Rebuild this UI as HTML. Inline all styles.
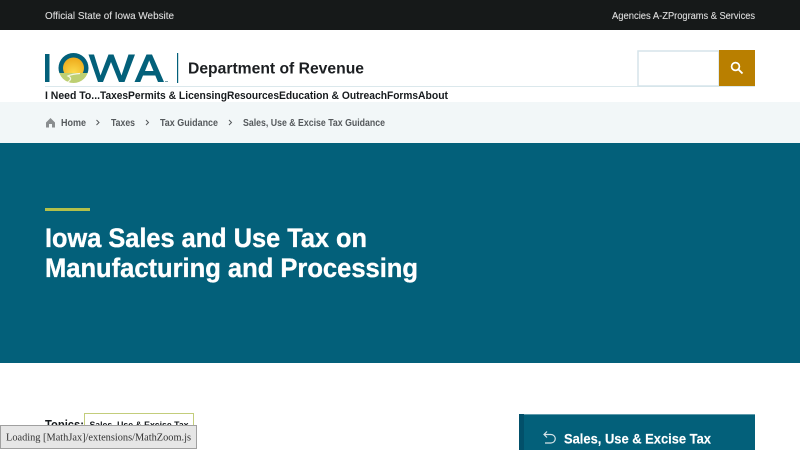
<!DOCTYPE html>
<html lang="en"><head><meta charset="utf-8"><title>Iowa Sales and Use Tax on Manufacturing and Processing</title>
<style>
html,body{margin:0;padding:0;width:800px;height:450px;overflow:hidden;background:#fff}
svg{display:block}
text{font-family:"Liberation Sans",sans-serif;white-space:pre}
.b{font-weight:700}
.n{font-size:11px;font-weight:700;fill:#161a1d}
.c{font-size:9.700px;font-weight:700;fill:#55595c}
.t{font-size:10.200px;fill:#dcdcdc;stroke:#dcdcdc;stroke-width:.12px}
.h{font-size:26.500px;font-weight:700;fill:#fff;stroke:#fff;stroke-width:.35px}
</style></head><body>
<svg width="800" height="450" viewBox="0 0 800 450" xmlns="http://www.w3.org/2000/svg">
<defs>
<radialGradient id="s" cx=".5" cy=".75" r=".75"><stop offset="0" stop-color="#fbdc4e"/><stop offset="1" stop-color="#eea91a"/></radialGradient>
<clipPath id="o"><circle cx="73.500" cy="68" r="15"/></clipPath>
<clipPath id="u"><rect x="55" y="50" width="40" height="23"/></clipPath>
</defs>
<rect width="800" height="30" fill="#161919"/>
<text class="t" x="45" y="19" textLength="129" lengthAdjust="spacingAndGlyphs">Official State of Iowa Website</text>
<text class="t" x="612" y="19" textLength="56" lengthAdjust="spacingAndGlyphs">Agencies A-Z</text>
<text class="t" x="668" y="19" textLength="87" lengthAdjust="spacingAndGlyphs">Programs &amp; Services</text>

<rect x="45" y="86" width="710" height="1" fill="#dbe8ec"/>
<!-- logo -->
<rect x="45" y="54" width="4.500" height="28" fill="#03607a"/>
<circle cx="73.500" cy="68" r="15" fill="#03607a" clip-path="url(#u)"/>
<circle cx="73.500" cy="68" r="10.500" fill="url(#s)" clip-path="url(#u)"/>
<g clip-path="url(#o)">
<rect x="58" y="73" width="31" height="11" fill="#bdcf72"/>
<path d="M66 83 Q74 79 68 76 Q72 74 80 73.500" fill="none" stroke="#f4f6e2" stroke-width="1.300"/>
</g>
<path d="M88.500 54.500 L94 54.500 L100.500 75.500 L108.500 54.500 L113.500 54.500 L121.500 75.500 L128.500 54.500 L135 54.500 L124.500 82 L119 82 L111 62 L103 82 L98 82Z" fill="#03607a"/>
<path fill-rule="evenodd" d="M146.500 54.500 L152 54.500 L164 82 L158 82 L155.300 75.500 L143 75.500 L140.300 82 L134.500 82Z M149.200 60.500 L145 71 L153.500 71Z" fill="#03607a"/>
<rect x="165" y="81" width="3" height="1" fill="#7ea3ae"/>
<rect x="177" y="53" width="1.200" height="30" fill="#03607a"/>
<text class="b" x="188" y="73.500" font-size="15.500" fill="#1b1e21" textLength="176" lengthAdjust="spacingAndGlyphs">Department of Revenue</text>

<!-- search -->
<rect x="638" y="51" width="81" height="35" fill="#fff" stroke="#d5e4ea" stroke-width="1.500"/>
<rect x="719" y="50" width="36" height="36" fill="#b97f00"/>
<circle cx="735.500" cy="66.500" r="3.900" fill="none" stroke="#fff" stroke-width="1.700"/>
<path d="M738.500 69.500 L742.500 73.500" stroke="#fff" stroke-width="1.900"/>

<!-- nav -->
<text class="n" x="45" y="99" textLength="55" lengthAdjust="spacingAndGlyphs">I Need To...</text>
<text class="n" x="100" y="99" textLength="28" lengthAdjust="spacingAndGlyphs">Taxes</text>
<text class="n" x="128" y="99" textLength="99" lengthAdjust="spacingAndGlyphs">Permits &amp; Licensing</text>
<text class="n" x="227" y="99" textLength="52" lengthAdjust="spacingAndGlyphs">Resources</text>
<text class="n" x="279" y="99" textLength="108" lengthAdjust="spacingAndGlyphs">Education &amp; Outreach</text>
<text class="n" x="387" y="99" textLength="31" lengthAdjust="spacingAndGlyphs">Forms</text>
<text class="n" x="418" y="99" textLength="30" lengthAdjust="spacingAndGlyphs">About</text>

<!-- breadcrumb -->
<rect y="102" width="800" height="41" fill="#f2f7f8"/>
<path d="M50.500 118 L46 122.500 L46 127.500 L49 127.500 L49 124 L52 124 L52 127.500 L55 127.500 L55 122.500Z" fill="#8a8e90"/>
<text class="c" x="61" y="126" textLength="25" lengthAdjust="spacingAndGlyphs">Home</text>
<path d="M96.500 120 L99 122.500 L96.500 125" fill="none" stroke="#55595c" stroke-width="1"/>
<text class="c" x="111" y="126" textLength="24" lengthAdjust="spacingAndGlyphs">Taxes</text>
<path d="M146 120 L148.500 122.500 L146 125" fill="none" stroke="#55595c" stroke-width="1"/>
<text class="c" x="160" y="126" textLength="58" lengthAdjust="spacingAndGlyphs">Tax Guidance</text>
<path d="M229 120 L231.500 122.500 L229 125" fill="none" stroke="#55595c" stroke-width="1"/>
<text class="c" x="243" y="126" textLength="142" lengthAdjust="spacingAndGlyphs">Sales, Use &amp; Excise Tax Guidance</text>

<!-- hero -->
<rect y="143" width="800" height="220" fill="#03607a"/>
<rect x="45" y="208" width="45" height="3" fill="#b3c04a"/>
<text class="h" x="45" y="247" textLength="322" lengthAdjust="spacingAndGlyphs">Iowa Sales and Use Tax on</text>
<text class="h" x="45" y="277" textLength="373" lengthAdjust="spacingAndGlyphs">Manufacturing and Processing</text>

<!-- topics -->
<text class="b" x="45" y="429" font-size="13" fill="#161a1d" textLength="39" lengthAdjust="spacingAndGlyphs">Topics:</text>
<rect x="84.500" y="413.500" width="109" height="30" fill="#fff" stroke="#c3cd7b"/>
<text class="b" x="89.500" y="428" font-size="9.500" fill="#161a1d" textLength="99" lengthAdjust="spacingAndGlyphs">Sales, Use &amp; Excise Tax</text>

<!-- sidebar -->
<rect x="519" y="414" width="236" height="36" fill="#03607a"/>
<rect x="519" y="414" width="236" height="1" fill="#5f9aab"/>
<rect x="519" y="414" width="5" height="36" fill="#02506a"/>
<path d="M544 434.500 L551 434.500 A4 4 0 0 1 551 443 L545 443 M547 431.500 L544 434.500 L547 437.500" fill="none" stroke="#d6e4e8" stroke-width="1.200"/>
<text class="b" x="564" y="443.500" font-size="13.500" fill="#fff" stroke="#fff" stroke-width=".15" textLength="147" lengthAdjust="spacingAndGlyphs">Sales, Use &amp; Excise Tax</text>

<!-- mathjax message -->
<rect x="0.500" y="425.500" width="196" height="23" fill="#e6e6e6" stroke="#a0a0a0"/>
<text x="6" y="440.500" font-size="10.500" fill="#333" style="font-family:'Liberation Serif',serif" textLength="185" lengthAdjust="spacingAndGlyphs">Loading [MathJax]/extensions/MathZoom.js</text>
</svg>
</body></html>
